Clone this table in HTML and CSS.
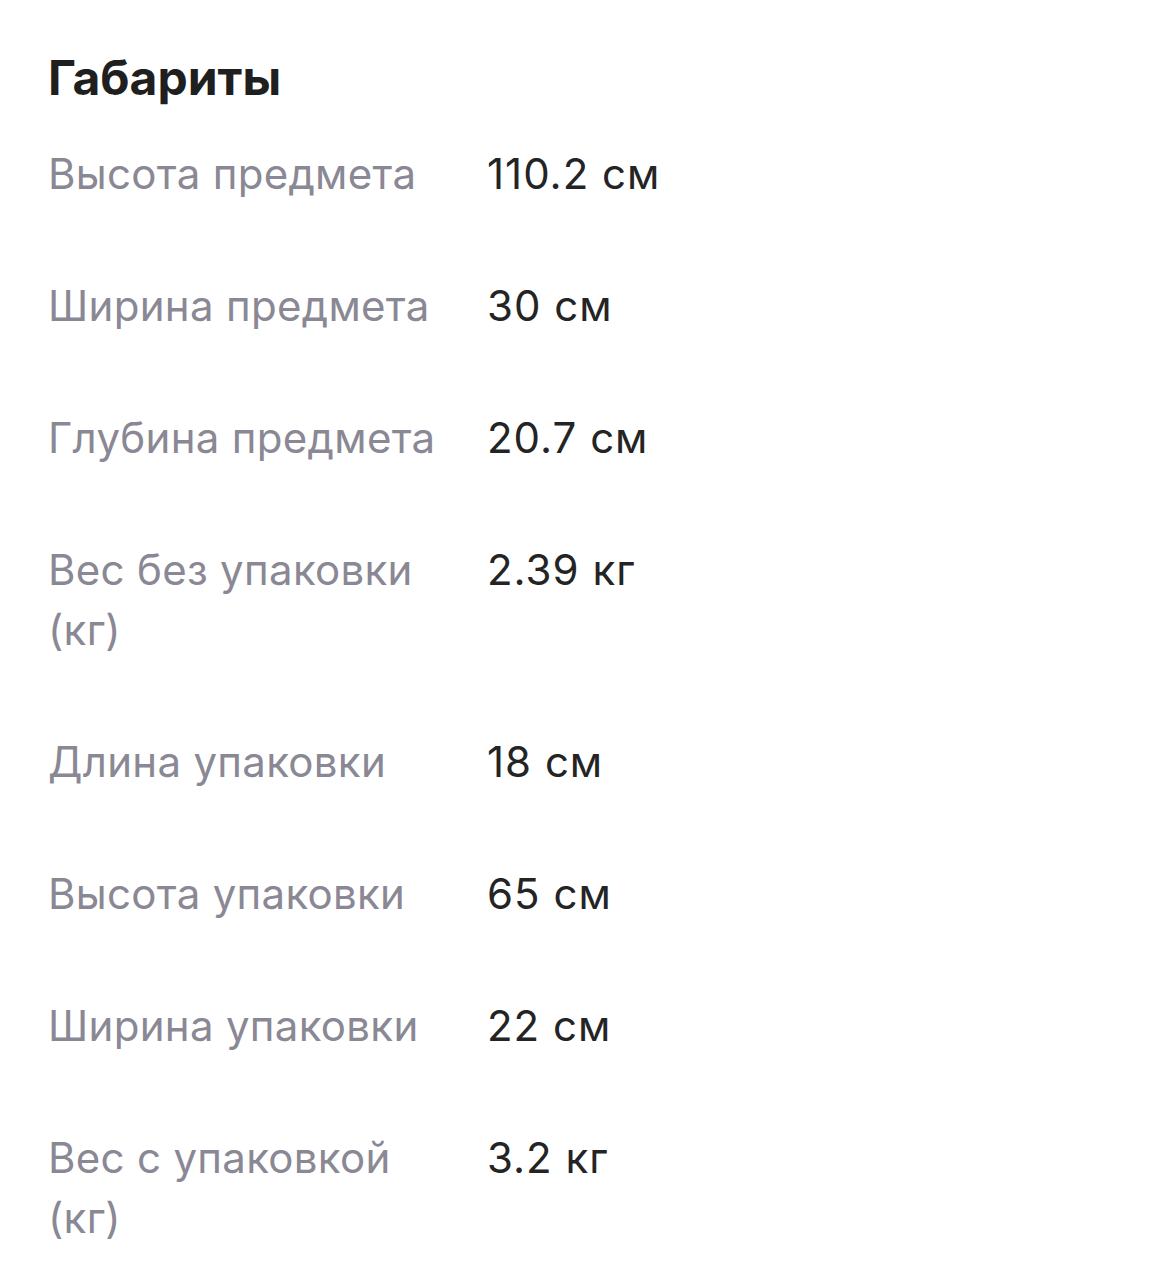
FILE: index.html
```html
<!DOCTYPE html>
<html lang="ru">
<head>
<meta charset="utf-8">
<link rel="stylesheet" href="styles.css">
</head>
<body>
<section class="specs">
  <h2 class="title">Габариты</h2>
  <dl class="list">
    <div class="row"><dt class="label">Высота предмета</dt><dd class="value">110.2 см</dd></div>
    <div class="row"><dt class="label">Ширина предмета</dt><dd class="value">30 см</dd></div>
    <div class="row"><dt class="label">Глубина предмета</dt><dd class="value">20.7 см</dd></div>
    <div class="row"><dt class="label">Вес без упаковки (кг)</dt><dd class="value">2.39 кг</dd></div>
    <div class="row"><dt class="label">Длина упаковки</dt><dd class="value">18 см</dd></div>
    <div class="row"><dt class="label">Высота упаковки</dt><dd class="value">65 см</dd></div>
    <div class="row"><dt class="label">Ширина упаковки</dt><dd class="value">22 см</dd></div>
    <div class="row"><dt class="label">Вес с упаковкой (кг)</dt><dd class="value">3.2 кг</dd></div>
  </dl>
</section>
</body>
</html>
```
FILE: styles.css
```css
html, body {
  margin: 0;
  padding: 0;
  background: #ffffff;
}
body {
  font-family: Inter, "Noto Sans", sans-serif;
  -webkit-font-smoothing: antialiased;
}
.specs {
  padding: 48px 48px 0 48px;
}
.title {
  margin: 0;
  font-size: 48px;
  font-weight: 700;
  line-height: 60px;
  color: #1f1f1f;
  letter-spacing: 0;
}
.list {
  margin: 0;
  padding-top: 36px;
  display: flex;
  flex-direction: column;
  gap: 72px;
}
.row {
  display: grid;
  grid-template-columns: 400px 1fr;
  column-gap: 39px;
}
.label, .value {
  margin: 0;
  font-size: 42px;
  line-height: 60px;
}
.label {
  color: #8a8894;
  letter-spacing: 0.3px;
}
.value {
  color: #242424;
  letter-spacing: 1px;
}
```
